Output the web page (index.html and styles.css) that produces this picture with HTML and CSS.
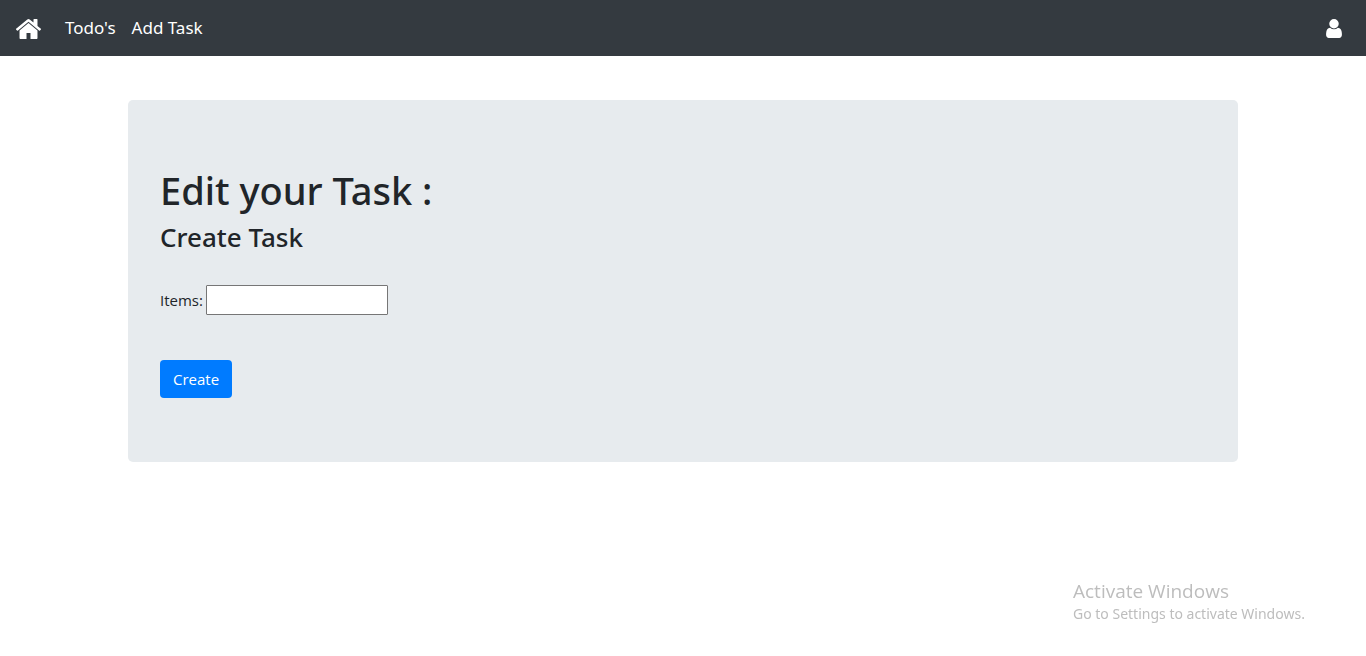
FILE: index.html
```html
<!DOCTYPE html>
<html lang="en">
<head>
<meta charset="utf-8">
<meta name="viewport" content="width=device-width, initial-scale=1">
<title>Edit Task</title>
<link rel="stylesheet" href="styles.css">
</head>
<body>
<nav class="navbar">
  <a class="brand" href="#" aria-label="Home">
    <svg class="icon-home" viewBox="96 253 1600 1283" aria-hidden="true"><path d="M1472 992v480q0 26-19 45t-45 19h-384v-384h-256v384h-384q-26 0-45-19t-19-45v-480q0-1 .5-3t.5-3l575-474 575 474q1 2 1 6zm223-69l-62 74q-8 9-21 11h-3q-13 0-21-7l-692-577-692 577q-12 8-24 7-13-2-21-11l-62-74q-8-10-7-23.5t11-21.5l719-599q32-26 76-26t76 26l244 204v-195q0-14 9-23t23-9h192q14 0 23 9t9 23v408l219 182q10 8 11 21.5t-7 23.5z"/></svg>
  </a>
  <a class="nav-link" href="#">Todo's</a>
  <a class="nav-link" href="#">Add Task</a>
  <a class="account" href="#" aria-label="Account">
    <svg class="icon-user" viewBox="256 128 1280 1536" aria-hidden="true"><path d="M1536 1399q0 109-62.5 187t-150.5 78h-854q-88 0-150.5-78t-62.5-187q0-85 8.5-160.5t31.5-152 58.5-131 94-89 134.5-34.5q131 128 313 128t313-128q76 0 134.5 34.5t94 89 58.5 131 31.5 152 8.5 160.5zm-256-887q0 159-112.5 271.5t-271.5 112.5-271.5-112.5-112.5-271.5 112.5-271.5 271.5-112.5 271.5 112.5 112.5 271.5z"/></svg>
  </a>
</nav>
<main class="container">
  <section class="jumbotron">
    <h1 class="title">Edit your Task :</h1>
    <h3 class="subtitle">Create Task</h3>
    <form class="task-form">
      <div class="field">
        <label for="items">Items:</label>
        <input class="text-input" id="items" type="text">
      </div>
      <button class="btn" type="submit">Create</button>
    </form>
  </section>
</main>
<aside class="watermark">
  <p class="watermark-title">Activate Windows</p>
  <p class="watermark-text">Go to Settings to activate Windows.</p>
</aside>
</body>
</html>
```
FILE: styles.css
```css
* {
  box-sizing: border-box;
}

body {
  margin: 0;
  background: #fff;
  color: #212529;
  font: 15px/24px "Segoe UI", "Open Sans", "Noto Sans", sans-serif;
}

.navbar {
  display: flex;
  align-items: center;
  height: 56px;
  padding: 0 24px 0 16px;
  background: #343a40;
}

.brand {
  display: flex;
  margin-right: 16px;
  padding-top: 2px;
}

.icon-home {
  width: 25px;
  height: 20px;
  fill: #fff;
}

.nav-link {
  padding: 0 8px;
  color: #fff;
  font-family: "Noto Sans", sans-serif;
  font-size: 17px;
  text-decoration: none;
}

.account {
  display: flex;
  margin-left: auto;
}

.icon-user {
  width: 16px;
  height: 19px;
  fill: #fff;
}

.container {
  max-width: 1140px;
  margin: 44px auto 0;
  padding: 0 15px;
}

.jumbotron {
  padding: 64px 32px;
  border-radius: 5px;
  background: #e7ebee;
}

.title,
.subtitle {
  margin: 0;
  font-family: "Noto Sans", sans-serif;
  font-weight: 500;
}

.title {
  margin-bottom: 4px;
  font-size: 38px;
  line-height: 52px;
}

.subtitle {
  margin-bottom: 31px;
  font-size: 26px;
  line-height: 34px;
}

.field {
  display: flex;
  align-items: center;
  gap: 3px;
  margin-bottom: 45px;
}

.text-input {
  width: 182px;
  height: 30px;
  padding: 1px 2px;
  border: 1px solid #767676;
  border-radius: 1px;
  background: #fff;
  font: inherit;
}

.btn {
  display: block;
  height: 38px;
  padding: 0 13px;
  border: 0;
  border-radius: 4px;
  background: #007bff;
  color: #fff;
  font: inherit;
}

.watermark {
  position: fixed;
  right: 57px;
  bottom: 30px;
  width: 236px;
  color: #bdbdbd;
}

.watermark-title,
.watermark-text {
  margin: 0;
}

.watermark-title {
  font-size: 19px;
  line-height: 22px;
}

.watermark-text {
  font-family: "Noto Sans", sans-serif;
  font-size: 14px;
}
```
